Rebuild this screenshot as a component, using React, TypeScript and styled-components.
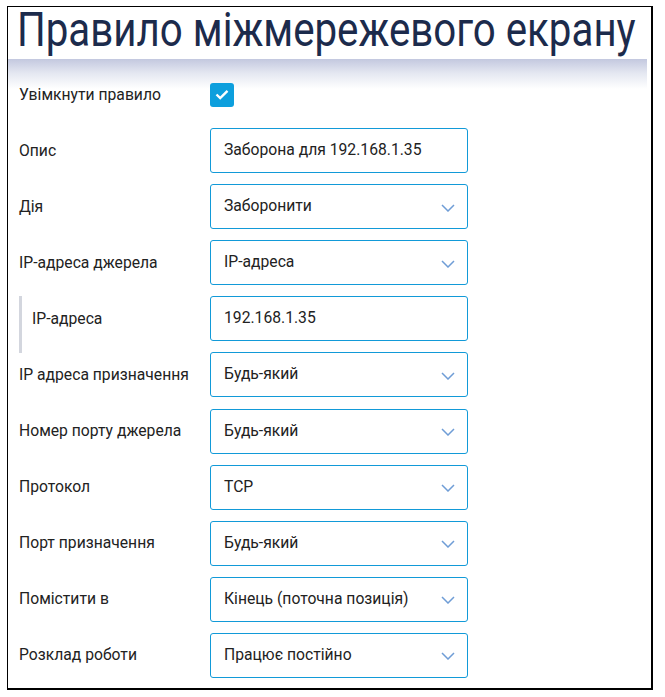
import React from "react";
import styled, { createGlobalStyle } from "styled-components";

const Global = createGlobalStyle`
  html, body { margin: 0; padding: 0; background: #fff; }
  body { font-family: Roboto, "Noto Sans", Arial, sans-serif; }
  * { box-sizing: border-box; }
`;

const Panel = styled.div`
  margin: 6px 0 0 7px;
  width: 646px;
  height: 684px;
  border: 1.5px solid #000;
  border-width: 1px 2px 2px 1px;
  background: #fff;
`;

const TitleBar = styled.div`
  height: 52px;
  padding-left: 9px;
`;

const Title = styled.h1`
  margin: 0 -130px 0 0;
  display: inline-block;
  font-family: Roboto, sans-serif;
  font-weight: 400;
  font-size: 48px;
  line-height: 46px;
  color: #1c2b4c;
  white-space: nowrap;
  transform: scaleX(0.839);
  transform-origin: 0 0;
`;

const Form = styled.div`
  margin-right: 4px;
  padding: 13px 0 0 11px;
  background: linear-gradient(#c3c8df 0px, #e4e7f1 14px, #ffffff 30px) no-repeat;
  display: flex;
  flex-direction: column;
  gap: 11.1px;
`;

const Row = styled.div<{ $nested?: boolean }>`
  display: flex;
  align-items: center;
  height: 45px;
  position: relative;
  ${(p) =>
    p.$nested &&
    `
    &::before {
      content: "";
      position: absolute;
      left: 0;
      top: -0.5px;
      width: 2.5px;
      height: 57px;
      background: #d3d6de;
    }
  `}
`;

const Label = styled.div<{ $nested?: boolean }>`
  width: 191px;
  padding-left: ${(p) => (p.$nested ? "13px" : "0")};
  font-size: 15.7px;
  color: #222;
  white-space: nowrap;
  margin-top: -1px;
`;

const Field = styled.div`
  width: 258px;
  height: 45px;
  border: 1px solid #129ad8;
  border-radius: 3px;
  display: flex;
  align-items: center;
  justify-content: space-between;
  padding: 0 12px 2px 13px;
  font-size: 15.7px;
  color: #222;
  white-space: nowrap;
`;

const Check = styled.div`
  width: 24px;
  height: 24px;
  border-radius: 3px;
  background: #0d9fdd;
  display: flex;
  align-items: center;
  justify-content: center;
`;

const Chevron = () => (
  <svg width="14" height="8" viewBox="0 0 14 8" style={{ marginTop: 4 }}>
    <path d="M1 1 L7 7 L13 1" fill="none" stroke="#6f9dd6" strokeWidth="1.5" />
  </svg>
);

type Item = { label: string; value: string; select?: boolean; nested?: boolean };

const items: Item[] = [
  { label: "Опис", value: "Заборона для 192.168.1.35" },
  { label: "Дія", value: "Заборонити", select: true },
  { label: "IP-адреса джерела", value: "IP-адреса", select: true },
  { label: "IP-адреса", value: "192.168.1.35", nested: true },
  { label: "IP адреса призначення", value: "Будь-який", select: true },
  { label: "Номер порту джерела", value: "Будь-який", select: true },
  { label: "Протокол", value: "TCP", select: true },
  { label: "Порт призначення", value: "Будь-який", select: true },
  { label: "Помістити в", value: "Кінець (поточна позиція)", select: true },
  { label: "Розклад роботи", value: "Працює постійно", select: true },
];

export default function App() {
  return (
    <>
      <Global />
      <Panel>
        <TitleBar>
          <Title>Правило міжмережевого екрану</Title>
        </TitleBar>
        <Form>
          <Row>
            <Label>Увімкнути правило</Label>
            <Check>
              <svg width="14" height="11" viewBox="0 0 14 11">
                <path d="M1.5 5.5 L5.2 9 L12.5 1.8" fill="none" stroke="#fff" strokeWidth="2.4" />
              </svg>
            </Check>
          </Row>
          {items.map((it, i) => (
            <Row key={i} $nested={it.nested}>
              <Label $nested={it.nested}>{it.label}</Label>
              <Field>
                <span>{it.value}</span>
                {it.select && <Chevron />}
              </Field>
            </Row>
          ))}
        </Form>
      </Panel>
    </>
  );
}
